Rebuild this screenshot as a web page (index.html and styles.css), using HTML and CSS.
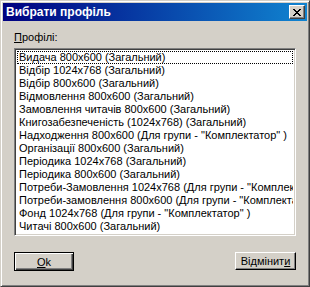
FILE: index.html
```html
<!DOCTYPE html>
<html lang="uk">
<head>
  <meta charset="UTF-8" />
  <title>Вибрати профіль</title>
  <link rel="stylesheet" href="styles.css">
</head>
<body>

  <div class="window">
    <div class="title-bar">
      <span class="title">Вибрати профіль</span>
      <div class="close-btn">
        <svg width="8" height="7" viewBox="0 0 8 7">
          <path d="M0 0h2v1h1v1h2v-1h1v-1h2v1h-1v1h-1v1h-1v1h1v1h1v1h1v1h-2v-1h-1v-1h-2v1h-1v1h-2v-1h1v-1h1v-1h1v-1h-1v-1h-1v-1h-1z" fill="#000"/>
        </svg>
      </div>
    </div>

    <div class="content">
      <div class="label"><u>П</u>рофілі:</div>

      <div class="listbox">
        <div class="item focused">Видача 800x600 (Загальний)</div>
        <div class="item">Відбір 1024x768 (Загальний)</div>
        <div class="item">Відбір 800x600 (Загальний)</div>
        <div class="item">Відмовлення 800x600 (Загальний)</div>
        <div class="item">Замовлення читачів 800x600 (Загальний)</div>
        <div class="item">Книгозабезпеченість (1024x768) (Загальний)</div>
        <div class="item">Надходження 800x600 (Для групи - "Комплектатор" )</div>
        <div class="item">Організації 800x600 (Загальний)</div>
        <div class="item">Періодика 1024x768 (Загальний)</div>
        <div class="item">Періодика 800x600 (Загальний)</div>
        <div class="item">Потреби-Замовлення 1024x768 (Для групи - "Комплектатор" )</div>
        <div class="item">Потреби-замовлення 800x600 (Для групи - "Комплектатор" )</div>
        <div class="item">Фонд 1024x768 (Для групи - "Комплектатор" )</div>
        <div class="item">Читачі 800x600 (Загальний)</div>
      </div>

      <div class="buttons">
        <div class="btn default"><span><u>O</u>k</span></div>
        <div class="btn">Відмінит<u>и</u></div>
      </div>
    </div>
  </div>

</body>
</html>
```

FILE: styles.css
```css
body {
  margin: 0;
  background: #d4d0c8;
  font-family: 'Liberation Sans', Arial, sans-serif;
  font-size: 11px;
  color: #000;
}

.window {
  width: 310px;
  height: 287px;
  box-sizing: border-box;
  background: #d4d0c8;
  border: 1px solid;
  border-color: #d4d0c8 #404040 #404040 #d4d0c8;
  box-shadow: inset 1px 1px #fff, inset -1px -1px #808080;
  padding: 2px;
}

.title-bar {
  height: 18px;
  background: linear-gradient(to right, #000080, #1084d0);
  display: flex;
  align-items: center;
  justify-content: space-between;
  padding: 0 2px 0 2px;
}

.title {
  color: #fff;
  font-weight: bold;
  font-size: 12px;
  padding-left: 1px;
}

.close-btn {
  width: 16px;
  height: 14px;
  box-sizing: border-box;
  background: #d4d0c8;
  border: 1px solid;
  border-color: #fff #404040 #404040 #fff;
  box-shadow: inset -1px -1px #808080;
  display: flex;
  align-items: center;
  justify-content: center;
  padding-right: 1px;
}

.content {
  padding: 10px 0 0 11px;
}

.label {
  height: 17px;
}

.listbox {
  width: 282px;
  height: 188px;
  box-sizing: border-box;
  background: #fff;
  border: 1px solid;
  border-color: #808080 #fff #fff #808080;
  box-shadow: inset 1px 1px #404040, inset -1px -1px #d4d0c8;
  padding: 2px 2px 0 2px;
  overflow: hidden;
}

.item {
  height: 13px;
  line-height: 13px;
  padding-left: 2px;
  white-space: nowrap;
  overflow: hidden;
}

.item.focused {
  outline: 1px dotted #000;
  outline-offset: -1px;
}

.buttons {
  display: flex;
  justify-content: space-between;
  width: 282px;
  margin-top: 16px;
}

.btn {
  width: 61px;
  height: 18px;
  box-sizing: border-box;
  border: 1px solid;
  border-color: #fff #000 #000 #fff;
  box-shadow: inset -1px -1px #808080;
  display: flex;
  align-items: center;
  justify-content: center;
}

.btn.default {
  width: 60px;
  height: 19px;
  border-color: #000;
  box-shadow: inset 1px 1px #fff, inset -1px -1px #404040, inset -2px -2px #808080;
}
```
